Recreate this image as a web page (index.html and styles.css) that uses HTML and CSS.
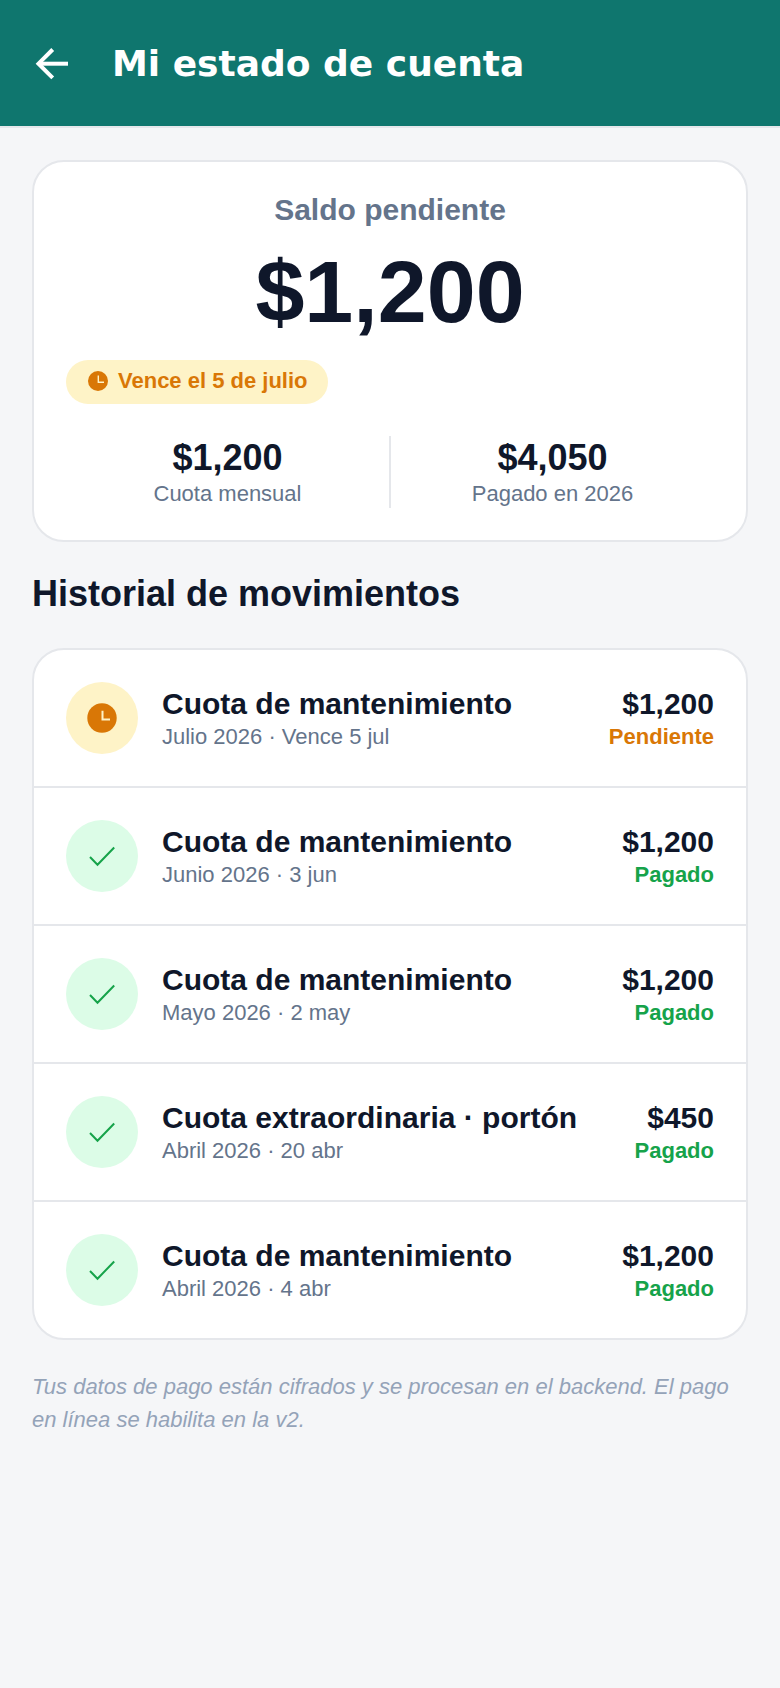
FILE: index.html
```html
<!DOCTYPE html>
<html lang="es">
	<head>
		<meta charset="utf-8">
		<title>Mi estado de cuenta</title>
		<link rel="stylesheet" href="styles.css">
	</head>
	<body>
		<header class="topbar">
			<svg class="back" viewBox="0 0 48 48" fill="none" stroke="#fff" stroke-width="4"><path d="M40 24.7H12"/><path d="M24.7 10.5L10.5 24.7l14.2 14.2"/></svg>
			<h1>Mi estado de cuenta</h1>
		</header>

		<main class="content">
			<section class="card balance">
				<div class="balance-label">Saldo pendiente</div>
				<div class="balance-amount">$1,200</div>
				<div class="badge-row">
					<span class="badge">
						<svg viewBox="0 0 24 24"><circle cx="12" cy="12" r="10" fill="#d97706"/><path d="M12.3 6.5V13.3H18" fill="none" stroke="#fef3c7" stroke-width="1.4"/></svg>
						Vence el 5 de julio
					</span>
				</div>
				<div class="stats">
					<div class="stat">
						<div class="stat-value">$1,200</div>
						<div class="stat-label">Cuota mensual</div>
					</div>
					<div class="stat">
						<div class="stat-value">$4,050</div>
						<div class="stat-label">Pagado en 2026</div>
					</div>
				</div>
			</section>

			<h2>Historial de movimientos</h2>

			<section class="card list">
				<div class="row">
					<div class="icon icon-pending">
						<svg viewBox="0 0 30 30"><circle cx="15" cy="15" r="14.7" fill="#d97706"/><path d="M15.5 7.7V16.5H23" fill="none" stroke="#fef3c7" stroke-width="2"/></svg>
					</div>
					<div class="info">
						<div class="title">Cuota de mantenimiento</div>
						<div class="sub">Julio 2026 · Vence 5 jul</div>
					</div>
					<div class="right">
						<div class="amount">$1,200</div>
						<div class="status pending">Pendiente</div>
					</div>
				</div>
				<div class="row">
					<div class="icon icon-paid">
						<svg viewBox="0 0 30 30"><path d="M3 16L10.5 23.7 27.2 6.5" fill="none" stroke="#16a34a" stroke-width="2"/></svg>
					</div>
					<div class="info">
						<div class="title">Cuota de mantenimiento</div>
						<div class="sub">Junio 2026 · 3 jun</div>
					</div>
					<div class="right">
						<div class="amount">$1,200</div>
						<div class="status paid">Pagado</div>
					</div>
				</div>
				<div class="row">
					<div class="icon icon-paid">
						<svg viewBox="0 0 30 30"><path d="M3 16L10.5 23.7 27.2 6.5" fill="none" stroke="#16a34a" stroke-width="2"/></svg>
					</div>
					<div class="info">
						<div class="title">Cuota de mantenimiento</div>
						<div class="sub">Mayo 2026 · 2 may</div>
					</div>
					<div class="right">
						<div class="amount">$1,200</div>
						<div class="status paid">Pagado</div>
					</div>
				</div>
				<div class="row">
					<div class="icon icon-paid">
						<svg viewBox="0 0 30 30"><path d="M3 16L10.5 23.7 27.2 6.5" fill="none" stroke="#16a34a" stroke-width="2"/></svg>
					</div>
					<div class="info">
						<div class="title">Cuota extraordinaria · portón</div>
						<div class="sub">Abril 2026 · 20 abr</div>
					</div>
					<div class="right">
						<div class="amount">$450</div>
						<div class="status paid">Pagado</div>
					</div>
				</div>
				<div class="row">
					<div class="icon icon-paid">
						<svg viewBox="0 0 30 30"><path d="M3 16L10.5 23.7 27.2 6.5" fill="none" stroke="#16a34a" stroke-width="2"/></svg>
					</div>
					<div class="info">
						<div class="title">Cuota de mantenimiento</div>
						<div class="sub">Abril 2026 · 4 abr</div>
					</div>
					<div class="right">
						<div class="amount">$1,200</div>
						<div class="status paid">Pagado</div>
					</div>
				</div>
			</section>

			<p class="note">Tus datos de pago están cifrados y se procesan en el backend. El pago en línea se habilita en la v2.</p>
		</main>
	</body>
</html>
```

FILE: styles.css
```css
* {
	box-sizing: border-box;
}

body {
	margin: 0;
	background: #f5f6f8;
	font-family: "Liberation Sans", Arial, sans-serif;
	color: #0f172a;
}

.topbar {
	display: flex;
	align-items: center;
	gap: 36px;
	height: 128px;
	padding: 0 28px;
	background: #0f766e;
	border-bottom: 2px solid #e5e7eb;
}

.back {
	width: 48px;
	height: 48px;
	flex: none;
}

.topbar h1 {
	margin: 0;
	color: #fff;
	font-family: "DejaVu Sans", sans-serif;
	font-size: 36px;
	font-weight: 700;
}

.content {
	padding: 32px;
}

.card {
	background: #fff;
	border: 2px solid #e5e7eb;
	border-radius: 32px;
}

.balance {
	padding: 32px;
}

.balance-label {
	text-align: center;
	color: #64748b;
	font-size: 30px;
	font-weight: 700;
	line-height: 32px;
}

.balance-amount {
	margin-top: 18px;
	text-align: center;
	font-size: 88px;
	font-weight: 700;
	line-height: 96px;
}

.badge-row {
	display: flex;
	margin-top: 20px;
}

.badge {
	display: inline-flex;
	align-items: center;
	gap: 8px;
	height: 44px;
	padding: 0 20px 2px;
	border-radius: 22px;
	background: #fef3c7;
	color: #d97706;
	font-size: 22px;
	font-weight: 700;
	line-height: 24px;
}

.badge svg {
	width: 24px;
	height: 24px;
}

.stats {
	display: flex;
	margin-top: 32px;
}

.stat {
	flex: 1;
	text-align: center;
}

.stat + .stat {
	border-left: 2px solid #e5e7eb;
}

.stat-value {
	font-size: 36px;
	font-weight: 700;
	line-height: 44px;
}

.stat-label {
	color: #64748b;
	font-size: 22px;
	line-height: 28px;
}

h2 {
	margin: 30px 0 32px;
	font-size: 36px;
	font-weight: 700;
	line-height: 44px;
}

.row {
	display: flex;
	align-items: center;
	padding: 32px;
	border-bottom: 2px solid #e5e7eb;
}

.row:last-child {
	border-bottom: 0;
}

.icon {
	display: flex;
	align-items: center;
	justify-content: center;
	width: 72px;
	height: 72px;
	flex: none;
	margin-right: 24px;
	border-radius: 50%;
}

.icon svg {
	width: 30px;
	height: 30px;
}

.icon-pending {
	background: #fef3c7;
}

.icon-paid {
	background: #dcfce7;
}

.info {
	flex: 1;
	min-width: 0;
	padding-top: 2px;
}

.title {
	font-size: 30px;
	font-weight: 700;
	line-height: 36px;
}

.sub {
	color: #64748b;
	font-size: 22px;
	line-height: 30px;
}

.right {
	padding-top: 2px;
	text-align: right;
}

.amount {
	font-size: 30px;
	font-weight: 700;
	line-height: 36px;
}

.status {
	font-size: 22px;
	font-weight: 700;
	line-height: 30px;
}

.pending {
	color: #d97706;
}

.paid {
	color: #16a34a;
}

.note {
	margin: 30px 0 0;
	color: #94a3b8;
	font-size: 22px;
	font-style: italic;
	line-height: 33px;
}
```
